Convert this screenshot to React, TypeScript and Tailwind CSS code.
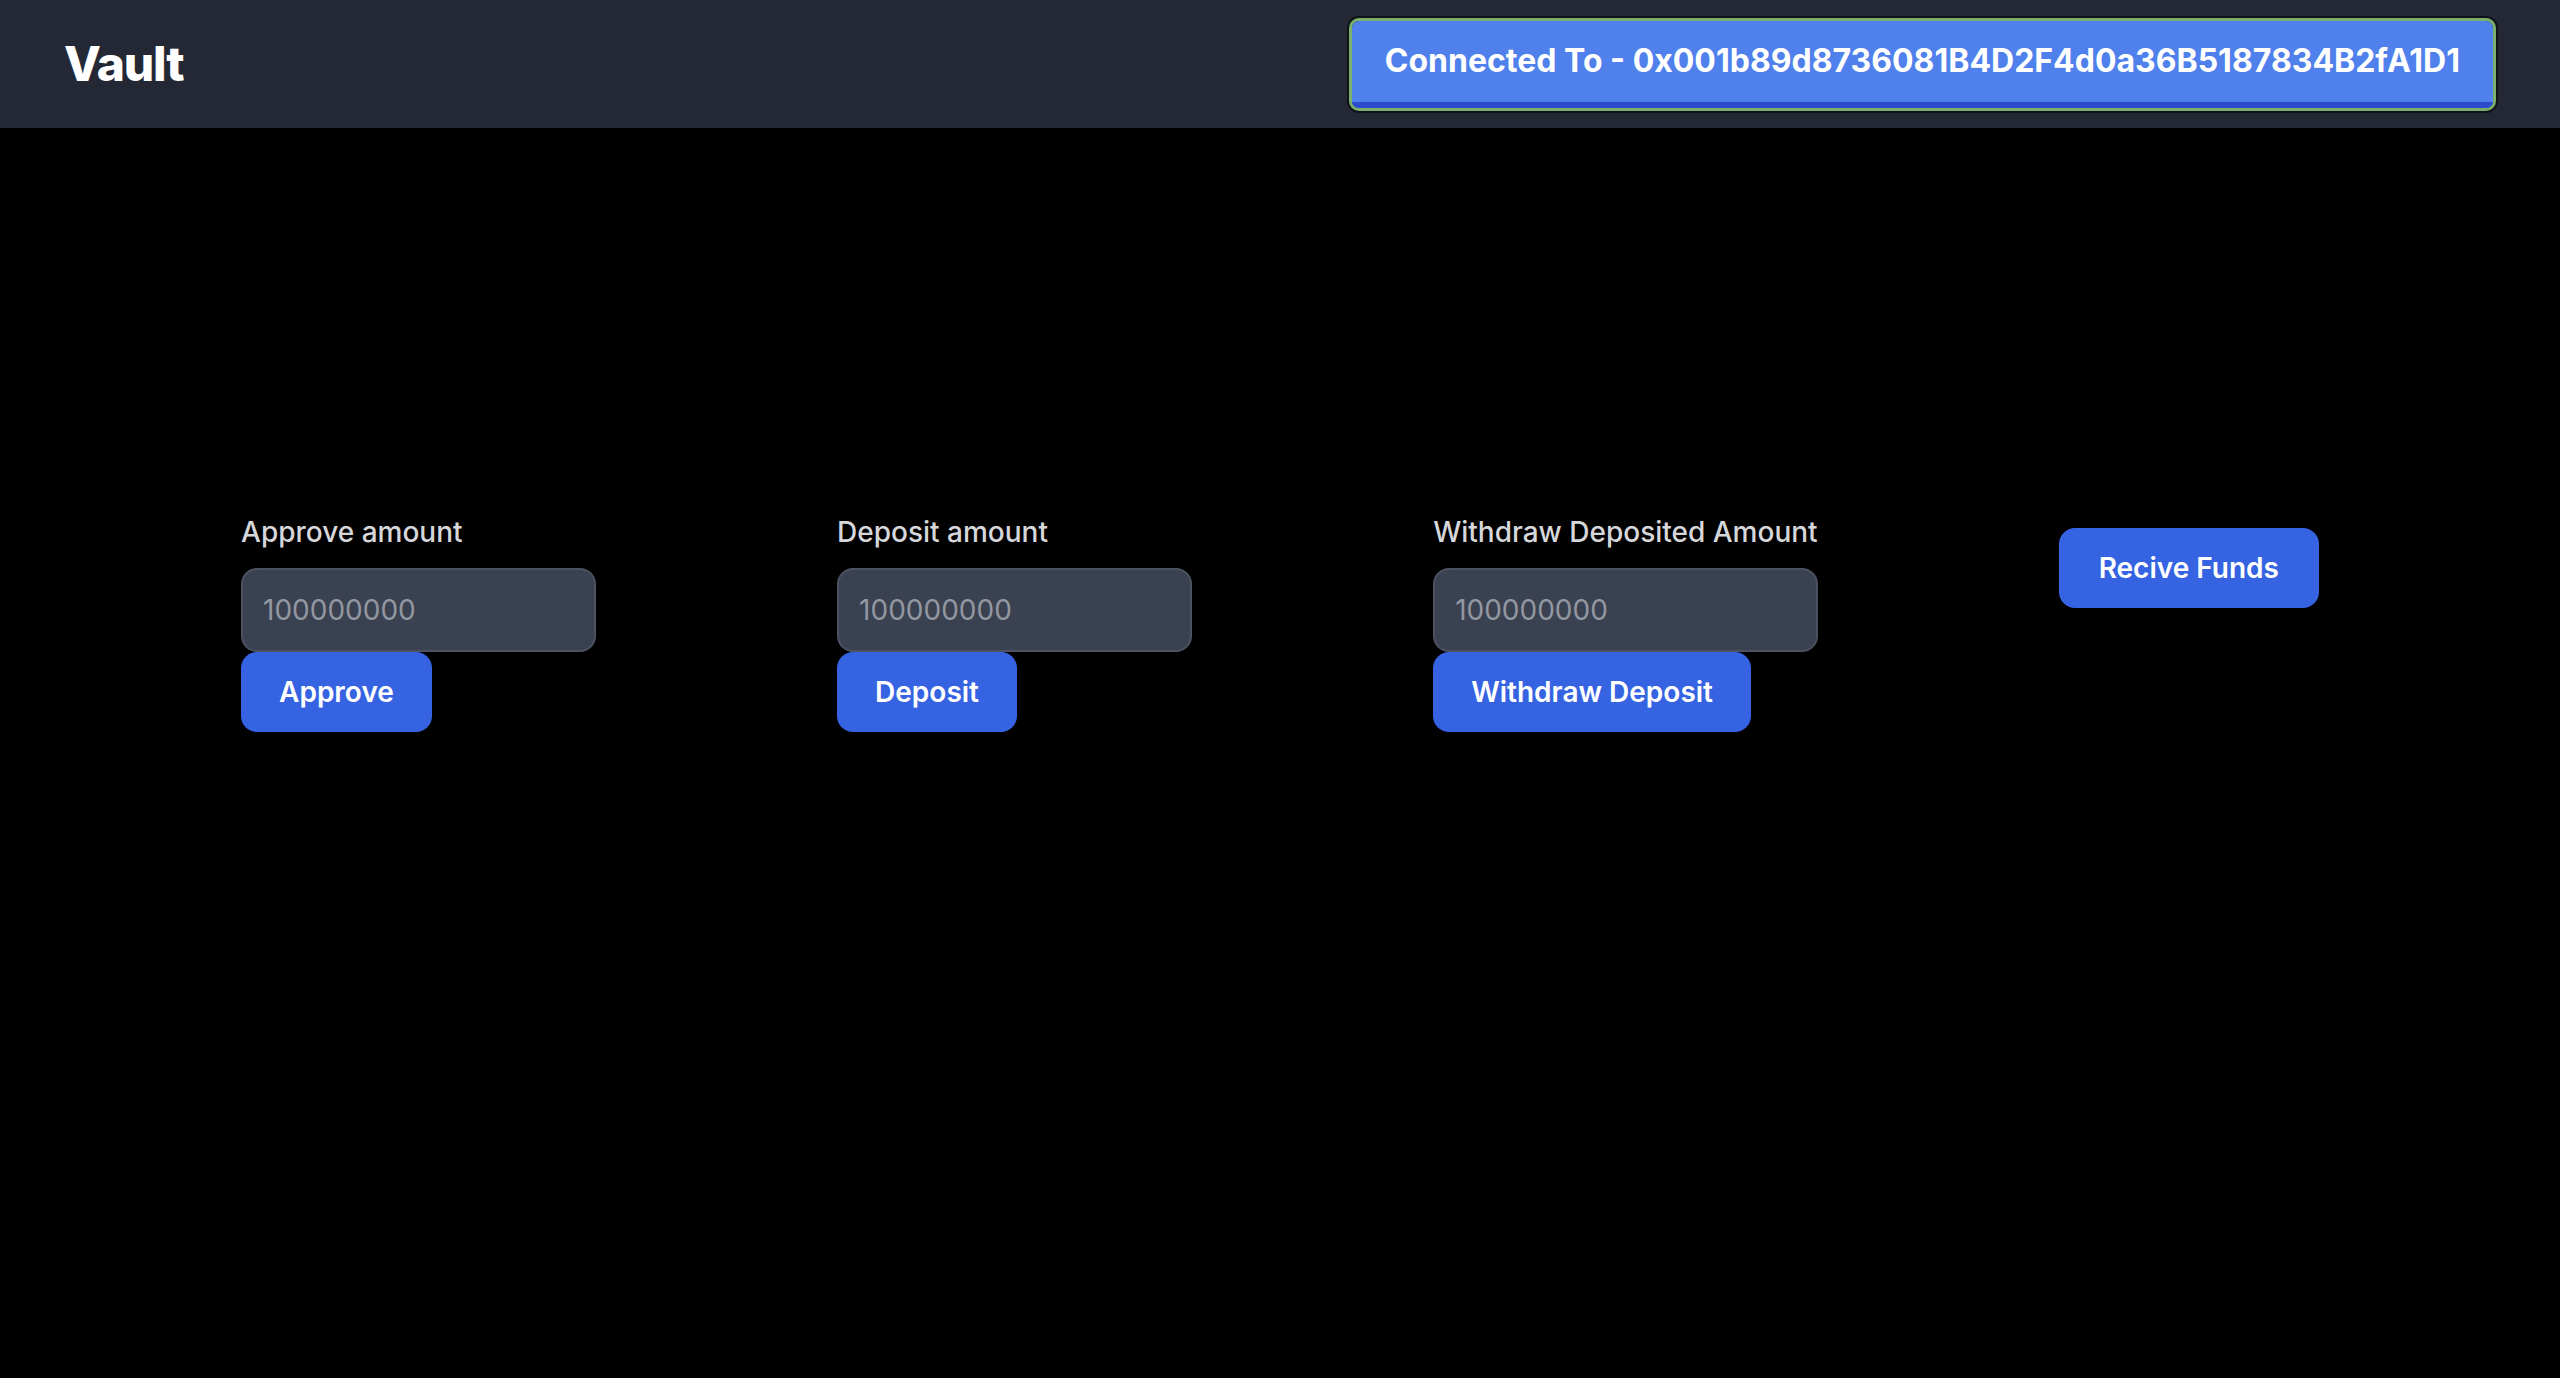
import React from "react";

const fields = [
  { label: "Approve amount", button: "Approve" },
  { label: "Deposit amount", button: "Deposit" },
  { label: "Withdraw Deposited Amount", button: "Withdraw Deposit" },
];

const Field = ({ label, button }: { label: string; button: string }) => {
  return (
    <div className="flex flex-col min-w-[355px]">
      <label className="block mb-[16px] text-[28px] leading-[40px] font-medium text-[#d6d7db]">
        {label}
      </label>
      <input
        type="text"
        size={1}
        placeholder="100000000"
        className="block w-full h-[84px] px-[20px] text-[28px] leading-[40px] rounded-[16px] bg-[#3a4150] border-2 border-[#4c5261] text-white placeholder-[#9297a1] outline-none"
      />
      <button className="self-start h-[80px] px-[38px] text-[28px] leading-[40px] font-semibold text-white bg-[#3563e2] rounded-[16px]">
        {button}
      </button>
    </div>
  );
};

const App = () => {
  return (
    <div className="min-h-[1378px] bg-black font-['Inter',sans-serif]">
      <nav className="flex items-center justify-between h-[128px] px-[62px] bg-[#232834]">
        <h1 className="ml-[2px] text-[48px] font-extrabold text-white tracking-tight">Vault</h1>
        <div className="border-2 border-[#0f1216] rounded-[12px]">
          <div className="border-[3px] border-[#7bb06c] rounded-[10px] overflow-hidden">
            <div className="flex items-center h-[87px] px-[33px] bg-[#4f80ec] border-b-[6px] border-[#2d4ccb] text-[32px] font-bold text-white">
              Connected To - 0x001b89d8736081B4D2F4d0a36B5187834B2fA1D1
            </div>
          </div>
        </div>
      </nav>
      <section className="flex justify-evenly items-start pt-[384px]">
        {fields.map((f) => (
          <Field key={f.label} label={f.label} button={f.button} />
        ))}
        <button className="mt-[16px] h-[80px] px-[40px] text-[28px] leading-[40px] font-semibold text-white bg-[#3563e2] rounded-[16px]">
          Recive Funds
        </button>
      </section>
    </div>
  );
};

export default App;
